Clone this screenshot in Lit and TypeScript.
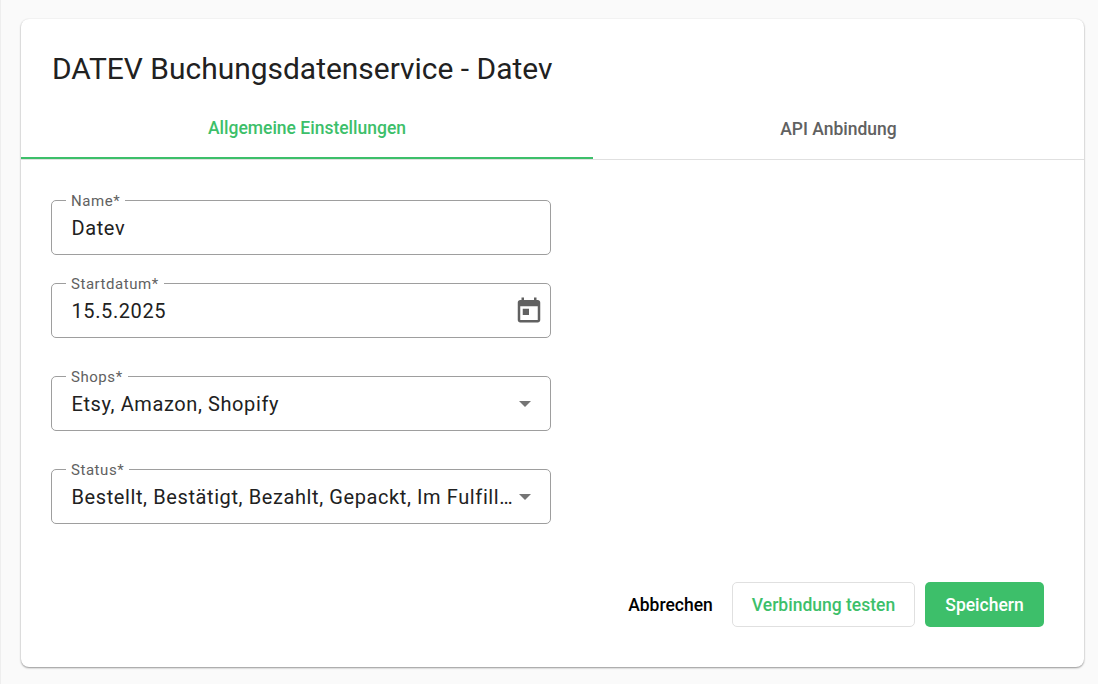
import { LitElement, html, css } from "lit";
import { customElement } from "lit/decorators.js";

const arrow = html`<svg class="arrow" viewBox="0 0 12 6" width="12" height="6"><path d="M0 0h12L6 6z" fill="#757575"/></svg>`;
const calendar = html`<svg class="cal" viewBox="0 0 24 24" width="30" height="30"><path fill="#616161" d="M19 4h-1V2h-2v2H8V2H6v2H5c-1.11 0-1.99.9-1.99 2L3 20c0 1.1.89 2 2 2h14c1.1 0 2-.9 2-2V6c0-1.1-.9-2-2-2zm0 16H5V9h14v11zM7 11h5v5H7z"/></svg>`;

@customElement("app-root")
export class AppRoot extends LitElement {
  static styles = css`
    :host {
      display: block;
      box-sizing: border-box;
      width: 1098px;
      height: 684px;
      padding: 19px 14px 17px 21px;
      background: #fafafa;
      box-shadow: inset 1px 0 0 #eeeeee;
      font-family: Roboto, "Noto Sans", sans-serif;
      overflow: hidden;
    }
    .card {
      background: #fff;
      border-radius: 8px;
      height: 648px;
      box-shadow: 0 1px 2px rgba(0, 0, 0, 0.4), 0 0 2px rgba(0, 0, 0, 0.06);
      display: flex;
      flex-direction: column;
    }
    h1 {
      margin: 0;
      padding: 31px 31px 0;
      font-size: 29.95px;
      line-height: 38px;
      font-weight: 400;
      color: #212121;
    }
    .tabs {
      margin-top: 10px;
      display: grid;
      grid-template-columns: 572px 1fr;
      border-bottom: 1px solid #e0e0e0;
      height: 61px;
    }
    .tab {
      display: flex;
      align-items: center;
      justify-content: center;
      font-size: 17.5px;
      font-weight: 500;
      color: #616161;
      height: 61px;
      box-sizing: border-box;
    }
    .tab.active {
      color: #3dbf6a;
      border-bottom: 2px solid #3dbf6a;
    }
    form {
      flex: 1;
      display: flex;
      flex-direction: column;
      padding: 40px 30px 0;
    }
    .field {
      position: relative;
      box-sizing: border-box;
      width: 500px;
      height: 55px;
      border: 1px solid #9e9e9e;
      border-radius: 5px;
      display: flex;
      align-items: center;
      padding: 0 8px 0 19.5px;
      gap: 3px;
      color: #212121;
      font-size: 20px;
      letter-spacing: 0.6px;
    }
    .field + .field { margin-top: 38px; }
    .field.tight + .field { margin-top: 28px; }
    .field .value {
      flex: 1;
      min-width: 0;
      white-space: nowrap;
      overflow: hidden;
      text-overflow: ellipsis;
    }
    .label {
      position: absolute;
      left: 14px;
      top: -8px;
      padding: 0 5px;
      background: #fff;
      color: #616161;
      font-size: 15px;
      line-height: 16px;
      letter-spacing: 0.55px;
    }
    .arrow { flex: none; margin-right: 11px; }
    .cal { flex: none; margin: 0 -2px 2px 0; }
    .actions {
      display: flex;
      justify-content: flex-end;
      align-items: center;
      padding: 58px 10px 0 0;
    }
    .btn {
      box-sizing: border-box;
      height: 45px;
      display: flex;
      align-items: center;
      justify-content: center;
      border-radius: 5px;
      font-size: 17.5px;
      font-weight: 500;
      white-space: nowrap;
    }
    .cancel { color: #000; width: 85px; margin-right: 19px; }
    .test { width: 183px; margin-right: 10px; color: #3dbf6a; border: 1px solid #e0e0e0; background: #fff; }
    .save { width: 119px; color: #fff; background: #3dbf6a; }
  `;

  render() {
    return html`
      <div class="card">
        <h1>DATEV Buchungsdatenservice - Datev</h1>
        <div class="tabs">
          <div class="tab active">Allgemeine Einstellungen</div>
          <div class="tab">API Anbindung</div>
        </div>
        <form>
          <div class="field tight"><span class="label">Name*</span><span class="value">Datev</span></div>
          <div class="field"><span class="label">Startdatum*</span><span class="value">15.5.2025</span>${calendar}</div>
          <div class="field"><span class="label">Shops*</span><span class="value">Etsy, Amazon, Shopify</span>${arrow}</div>
          <div class="field"><span class="label">Status*</span><span class="value">Bestellt, Bestätigt, Bezahlt, Gepackt, Im Fulfillment, Versendet</span>${arrow}</div>
          <div class="actions">
            <div class="btn cancel">Abbrechen</div>
            <div class="btn test">Verbindung testen</div>
            <div class="btn save">Speichern</div>
          </div>
        </form>
      </div>
    `;
  }
}
